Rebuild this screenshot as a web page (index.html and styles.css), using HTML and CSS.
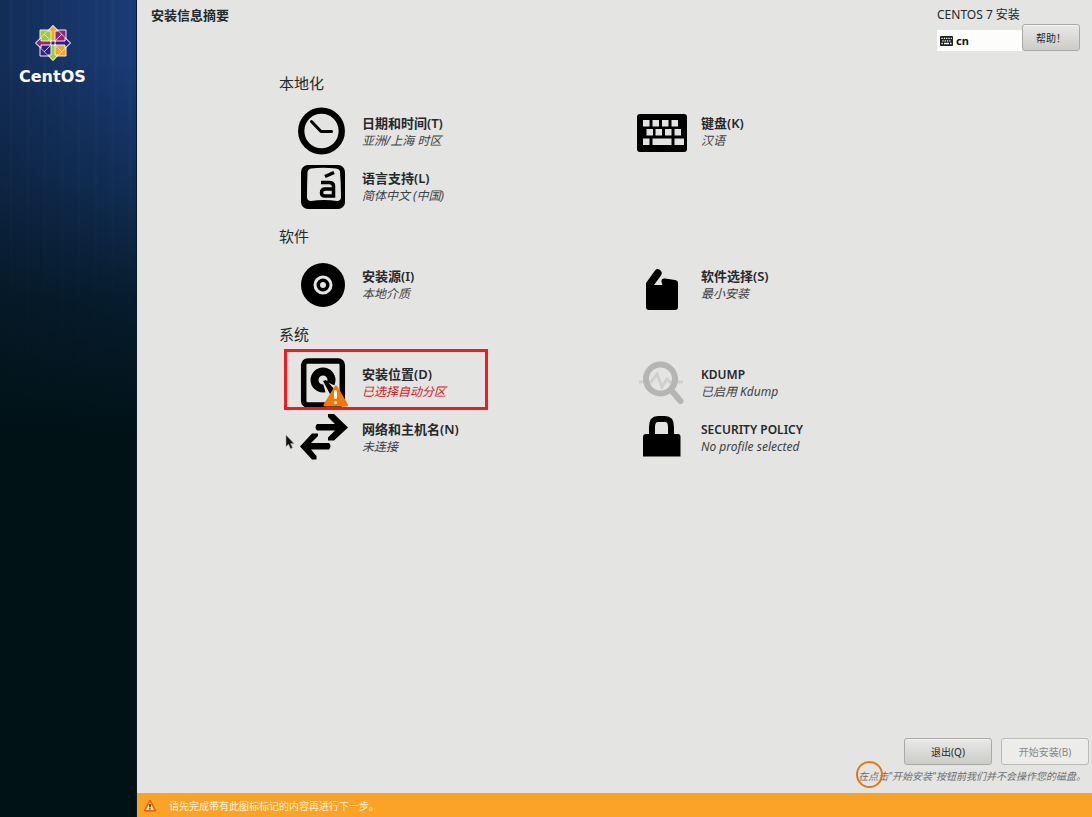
FILE: index.html
```html
<!DOCTYPE html>
<html lang="zh-CN">
<head>
<meta charset="utf-8">
<meta name="viewport" content="width=device-width, initial-scale=1">
<title>安装信息摘要</title>
<link rel="stylesheet" href="styles.css">
</head>
<body>
<div class="installer">
  <aside class="sidebar">
    <svg class="emblem" viewBox="-19 -19 38 38" aria-hidden="true">
      <g stroke="#f1edf5" stroke-width="1">
        <path fill="#9ccd2a" d="M-13-13H0V0H-13z"/>
        <path fill="#932279" d="M0-13H13V0H0z"/>
        <path fill="#262577" d="M-13 0H0V13H-13z"/>
        <path fill="#efa724" d="M0 0H13V13H0z"/>
        <path fill="none" stroke-width=".8" d="M-9-9L9 9M9-9L-9 9M0-17.500L17.500 0 0 17.500-17.500 0z"/>
        <path fill="#efa724" d="M0-17.500L5-12H2V-3L0-1-2-3V-12H-5z"/>
        <path fill="#262577" d="M17.500 0L12 5V2H3L1 0 3-2H12V-5z"/>
        <path fill="#9ccd2a" d="M0 17.500L-5 12H-2V3L0 1 2 3V12H5z"/>
        <path fill="#932279" d="M-17.500 0L-12-5V-2H-3L-1 0-3 2H-12V5z"/>
        <path fill="#262577" d="M-2-2H2V2H-2z"/>
      </g>
    </svg>
    <div class="brand">CentOS</div>
  </aside>

  <main class="main">
    <header class="topbar">
      <h1 class="page-title">安装信息摘要</h1>
      <div class="topbar-side">
        <p class="product">CENTOS 7 安装</p>
        <div class="topbar-controls">
          <button class="layout-indicator" type="button">
            <svg class="layout-icon" viewBox="0 0 13 10" aria-hidden="true"><rect y="0" width="13" height="10" rx="1" fill="#1b2023"/><path stroke="#fff" stroke-width="1.3" stroke-dasharray="1.3 1" d="M1.5 2.3H11.8M2.3 4.8H11.5M1.5 7.5H3"/><path stroke="#fff" stroke-width="1.3" d="M4 7.5H9M10 7.5H11.5"/></svg>
            <span>cn</span>
          </button>
          <button class="btn btn-help" type="button">帮助！</button>
        </div>
      </div>
    </header>

    <div class="hub">
      <section class="category">
        <h2 class="category-title">本地化</h2>
        <div class="spokes">
          <button class="spoke" type="button">
            <svg class="spoke-icon" viewBox="0 0 50 54" aria-hidden="true"><circle cx="23.5" cy="26" r="20.300" fill="none" stroke="#000" stroke-width="6.300"/><path d="M13.500 16.500L23 26.500H33.500" fill="none" stroke="#000" stroke-width="3" stroke-linecap="round" stroke-linejoin="round"/></svg>
            <span class="spoke-text"><span class="spoke-name">日期和时间(T)</span><span class="spoke-status">亚洲/上海 时区</span></span>
          </button>
          <button class="spoke" type="button">
            <svg class="spoke-icon" viewBox="0 0 50 54" aria-hidden="true"><rect y="9" width="50" height="38" rx="3"/><path transform="translate(0 1)" fill="#e4e4e2" d="M6 14h6.500v6.500H6zM15.500 14H22v6.500h-6.500zM25 14h6.500v6.500H25zM34.500 14H41v6.500h-6.500zM9.500 23H16v6.500H9.500zM18.500 23H25v6.500h-6.500zM28 23h6.500v6.500H28zM37.500 23H44v6.500h-6.500zM6 32.500h6.500V39H6zM15.500 32.500H34.500V39h-19zM37.500 32.500H47V39h-9.500z"/></svg>
            <span class="spoke-text"><span class="spoke-name">键盘(K)</span><span class="spoke-status">汉语</span></span>
          </button>
          <button class="spoke" type="button">
            <svg class="spoke-icon" viewBox="0 0 50 54" aria-hidden="true"><rect x="3" y="5" width="44" height="44" rx="7"/><path fill="#e4e4e2" d="M13 8.500Q25 7 38 8.500Q42 9 42 12Q43 24 43 37Q43 41 39 41Q26 39 13 41Q9 41 9 37Q9 24 9.500 12Q10 9 13 8.500z"/><path fill="none" stroke="#000" stroke-width="3.500" d="M23 22.500H31Q35.500 22.500 35.500 26V36H27Q23.500 36 23.500 33Q23.500 29 27 29H35M27 16.500L36 12.500"/></svg>
            <span class="spoke-text"><span class="spoke-name">语言支持(L)</span><span class="spoke-status">简体中文 (中国)</span></span>
          </button>
        </div>
      </section>

      <section class="category">
        <h2 class="category-title">软件</h2>
        <div class="spokes">
          <button class="spoke" type="button">
            <svg class="spoke-icon" viewBox="0 0 50 54" aria-hidden="true"><circle cx="25" cy="27" r="22"/><circle cx="25" cy="27" r="8" fill="none" stroke="#e4e4e2" stroke-width="3"/><circle cx="25" cy="27" r="3" fill="#e4e4e2"/></svg>
            <span class="spoke-text"><span class="spoke-name">安装源(I)</span><span class="spoke-status">本地介质</span></span>
          </button>
          <button class="spoke" type="button">
            <svg class="spoke-icon" viewBox="0 0 50 54" aria-hidden="true"><path d="M9 25L18 12.500Q20 10 23 12Q26 14.500 24 17.500L17 27H25.500L24.500 24Q24 20 28 20.500L38 22Q41 22.500 41 25V49Q41 52 38 52H12Q9 52 9 49z"/></svg>
            <span class="spoke-text"><span class="spoke-name">软件选择(S)</span><span class="spoke-status">最小安装</span></span>
          </button>
        </div>
      </section>

      <section class="category">
        <h2 class="category-title">系统</h2>
        <div class="spokes">
          <button class="spoke spoke-incomplete" type="button">
            <svg class="spoke-icon" viewBox="0 0 50 54" aria-hidden="true"><rect x="5.700" y="5" width="38.600" height="44" rx="4" fill="#e4e4e2" stroke="#000" stroke-width="5.500"/><circle cx="25" cy="24" r="8.500" fill="none" stroke="#000" stroke-width="8"/><path fill="#e4e4e2" d="M24 24L38 30 35 41 28 38z"/><path d="M25 25L28 24 37 34 32 38z"/><path fill="#f57900" stroke="#f57900" stroke-width="3" stroke-linejoin="round" d="M38 31L48.500 49H27z"/><path stroke="#fff" stroke-width="3" stroke-linecap="round" d="M37.500 35.500V41.500M37.500 46.500V46.600"/></svg>
            <span class="spoke-text"><span class="spoke-name">安装位置(D)</span><span class="spoke-status">已选择自动分区</span></span>
            <span class="highlight"></span>
          </button>
          <button class="spoke spoke-disabled" type="button">
            <svg class="spoke-icon" viewBox="0 0 50 54" aria-hidden="true"><path fill="none" stroke="#d0d0cf" stroke-width="3" d="M2 26H14L20 18 25 31 30 23 33 26H46"/><circle cx="23.500" cy="23" r="14.500" fill="none" stroke="#b5b5b3" stroke-width="6"/><path stroke="#b5b5b3" stroke-width="6" stroke-linecap="round" d="M34 34L43.500 45"/></svg>
            <span class="spoke-text"><span class="spoke-name spoke-name-latin">KDUMP</span><span class="spoke-status">已启用 Kdump</span></span>
          </button>
          <button class="spoke" type="button">
            <svg class="spoke-icon" viewBox="0 0 50 54" aria-hidden="true"><path transform="translate(0 -1)" d="M19 14H37L30 7V4H36L50 17.500 36 30.500H30V27.500L37 20.500H19Q16 17.500 19 14zM31 33H13L20 26V23.500H14L2 36.500 14 49.500H18.500V46L13 39.500H31Q34 36 31 33z"/></svg>
            <span class="spoke-text"><span class="spoke-name">网络和主机名(N)</span><span class="spoke-status">未连接</span></span>
            <svg class="pointer" viewBox="0 0 10 16" aria-hidden="true"><path fill="#111" stroke="#aaa" stroke-width=".6" d="M1 1V12.500L3.600 10.300 5.500 14.700 7.500 13.800 5.700 9.600H9z"/></svg>
          </button>
          <button class="spoke" type="button">
            <svg class="spoke-icon" viewBox="0 0 50 54" aria-hidden="true"><path fill="none" stroke="#000" stroke-width="6" d="M15 26V16Q15 8 21 8H28Q34 8 34 16V26"/><path d="M9 23H41Q43.500 23 43.500 26V45.500H6V26Q6 23 9 23z"/></svg>
            <span class="spoke-text"><span class="spoke-name spoke-name-latin">SECURITY POLICY</span><span class="spoke-status">No profile selected</span></span>
          </button>
        </div>
      </section>
    </div>

    <footer class="actions">
      <div class="action-buttons">
        <button class="btn" type="button">退出(Q)</button>
        <button class="btn" type="button" disabled>开始安装(B)</button>
      </div>
      <p class="note">在点击"开始安装"按钮前我们并不会操作您的磁盘。<span class="note-ring"></span></p>
    </footer>

    <div class="warning-bar" role="status">
      <svg class="warning-icon" viewBox="0 0 14 13" aria-hidden="true"><path fill="#f57900" stroke="#b9651b" stroke-width="1" stroke-linejoin="round" d="M7 1L13 12H1z"/><path fill="#f4d9ae" d="M7 3.200L11 11H3z"/><path stroke="#3c2b18" stroke-width="1.500" d="M7 5V8.300M7 9.200V10.500"/></svg>
      <span>请先完成带有此图标标记的内容再进行下一步。</span>
    </div>
  </main>
</div>
</body>
</html>
```

FILE: styles.css
```css
* {
  box-sizing: border-box;
}

body {
  margin: 0;
  font-family: "Noto Sans", "Noto Sans CJK SC", sans-serif;
  font-size: 13px;
  color: #23292c;
  background: #e4e4e2;
}

h1, h2, p {
  margin: 0;
}

button {
  font: inherit;
  color: inherit;
}

.installer {
  display: flex;
  min-height: 100vh;
}

/* Sidebar */
.sidebar {
  flex: 0 0 137px;
  padding: 24px 0 0 19px;
  background:
    linear-gradient(to bottom, #00121600 60px, #00121650 180px, #001216c0 300px, #001216 440px),
    repeating-linear-gradient(to right, #ffffff00 0 9px, #ffffff04 10px 12px, #ffffff00 13px 17px),
    linear-gradient(to right, #132d57, #193b76);
  border-right: 1px solid #0c1c26;
}

.emblem {
  display: block;
  width: 38px;
  height: 38px;
  margin-left: 15px;
}

.brand {
  margin-top: 5px;
  font: bold 16px/20px "DejaVu Sans", sans-serif;
  color: #fff;
}

/* Main column */
.main {
  flex: 1;
  min-width: 0;
  display: flex;
  flex-direction: column;
}

.topbar {
  display: flex;
  justify-content: space-between;
  padding: 5px 12px 0 14px;
}

.page-title {
  font-size: 13px;
  line-height: 20px;
  font-weight: 700;
}

.product {
  font-size: 12px;
  line-height: 19px;
}

.topbar-controls {
  display: flex;
  align-items: flex-end;
}

.layout-indicator {
  display: flex;
  align-items: center;
  gap: 3px;
  width: 85px;
  height: 21px;
  padding: 0 3px;
  border: 0;
  background: #fdfdfc;
  color: #111;
  font-size: 11px;
  line-height: 16px;
  font-weight: 700;
}

.layout-icon {
  width: 13px;
  height: 10px;
}

.btn {
  width: 88px;
  height: 27px;
  padding: 0;
  border: 1px solid #a9aaa6;
  border-radius: 3px;
  background: linear-gradient(#e9e9e8, #cbccc8);
  box-shadow: inset 0 1px #f3f3f2;
  font-size: 10px;
  line-height: 14px;
}

.btn:disabled {
  border-color: #b9bab7;
  background: #ececeb;
  color: #868886;
}

.btn-help {
  width: 58px;
}

/* Categories */
.hub {
  display: flex;
  flex-direction: column;
  gap: 12px;
  padding: 22px 116px 24px 142px;
}

.category-title {
  margin-bottom: 11px;
  font-size: 15px;
  line-height: 20px;
  font-weight: 400;
}

.spokes {
  display: grid;
  grid-template-columns: 1fr 1fr;
  padding-left: 19px;
}

.spoke {
  position: relative;
  display: flex;
  align-items: center;
  gap: 14px;
  min-height: 55px;
  padding: 0;
  border: 0;
  background: none;
  text-align: left;
}

.spoke-icon {
  flex: none;
  width: 50px;
  height: 54px;
}

.spoke-text {
  display: flex;
  flex-direction: column;
}

.spoke-name {
  font-size: 13px;
  line-height: 17px;
  font-weight: 600;
}

.spoke-name-latin {
  font-size: 12px;
}

.spoke-status {
  font-size: 12px;
  line-height: 17px;
  font-style: italic;
  color: #3c4144;
}

.spoke-incomplete .spoke-status {
  color: #cc1a1f;
}

.highlight {
  position: absolute;
  top: -6px;
  left: -14px;
  width: 204px;
  height: 61px;
  border: 3px solid #ed1c24;
}

.pointer {
  position: absolute;
  top: 24px;
  left: -13px;
  width: 10px;
  height: 16px;
}

/* Footer */
.actions {
  margin-top: auto;
  padding: 0 3px 8px;
}

.action-buttons {
  display: flex;
  justify-content: flex-end;
  gap: 9px;
}

.note {
  position: relative;
  width: max-content;
  margin: 2px 3px 0 auto;
  font-size: 10px;
  line-height: 18px;
  font-style: italic;
  color: #6c6f70;
}

.note-ring {
  position: absolute;
  top: -6px;
  left: -2px;
  width: 27px;
  height: 27px;
  border: 2px solid #dd7a11;
  border-radius: 50%;
}

.warning-bar {
  display: flex;
  align-items: center;
  gap: 12px;
  height: 24px;
  padding: 0 6px;
  background: #fba326;
  color: #fff3dc;
  font-size: 10px;
}

.warning-icon {
  width: 14px;
  height: 13px;
}
```
